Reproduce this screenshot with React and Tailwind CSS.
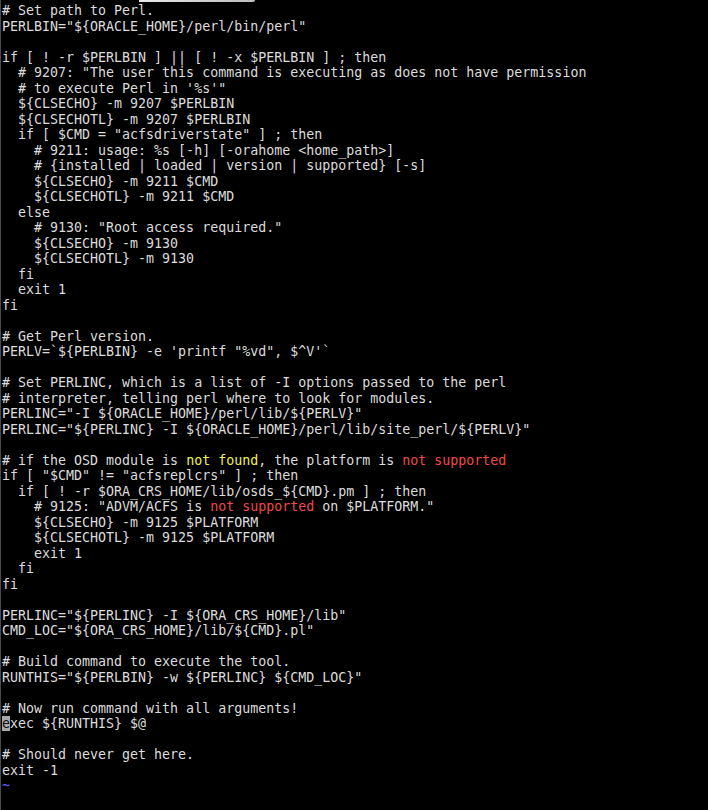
import React from 'react';

// Lines of the shell script as shown in the terminal (vim) window.
// Each line is a list of segments: plain strings, or [text, kind].
const lines = [
  ['# Set path to Perl.'],
  ['PERLBIN="${ORACLE_HOME}/perl/bin/perl"'],
  [''],
  ['if [ ! -r $PERLBIN ] || [ ! -x $PERLBIN ] ; then'],
  ['  # 9207: "The user this command is executing as does not have permission'],
  ["  # to execute Perl in '%s'\""],
  ['  ${CLSECHO} -m 9207 $PERLBIN'],
  ['  ${CLSECHOTL} -m 9207 $PERLBIN'],
  ['  if [ $CMD = "acfsdriverstate" ] ; then'],
  ['    # 9211: usage: %s [-h] [-orahome <home_path>]'],
  ['    # {installed | loaded | version | supported} [-s]'],
  ['    ${CLSECHO} -m 9211 $CMD'],
  ['    ${CLSECHOTL} -m 9211 $CMD'],
  ['  else'],
  ['    # 9130: "Root access required."'],
  ['    ${CLSECHO} -m 9130'],
  ['    ${CLSECHOTL} -m 9130'],
  ['  fi'],
  ['  exit 1'],
  ['fi'],
  [''],
  ['# Get Perl version.'],
  ['PERLV=`${PERLBIN} -e \'printf "%vd", $^V\'`'],
  [''],
  ['# Set PERLINC, which is a list of -I options passed to the perl'],
  ['# interpreter, telling perl where to look for modules.'],
  ['PERLINC="-I ${ORACLE_HOME}/perl/lib/${PERLV}"'],
  ['PERLINC="${PERLINC} -I ${ORACLE_HOME}/perl/lib/site_perl/${PERLV}"'],
  [''],
  ['# if the OSD module is ', ['not found', 'yellow'], ', the platform is ', ['not supported', 'red']],
  ['if [ "$CMD" != "acfsreplcrs" ] ; then'],
  ['  if [ ! -r $ORA_CRS_HOME/lib/osds_${CMD}.pm ] ; then'],
  ['    # 9125: "ADVM/ACFS is ', ['not supported', 'red'], ' on $PLATFORM."'],
  ['    ${CLSECHO} -m 9125 $PLATFORM'],
  ['    ${CLSECHOTL} -m 9125 $PLATFORM'],
  ['    exit 1'],
  ['  fi'],
  ['fi'],
  [''],
  ['PERLINC="${PERLINC} -I ${ORA_CRS_HOME}/lib"'],
  ['CMD_LOC="${ORA_CRS_HOME}/lib/${CMD}.pl"'],
  [''],
  ['# Build command to execute the tool.'],
  ['RUNTHIS="${PERLBIN} -w ${PERLINC} ${CMD_LOC}"'],
  [''],
  ['# Now run command with all arguments!'],
  [['e', 'cursor'], 'xec ${RUNTHIS} $@'],
  [''],
  ['# Should never get here.'],
  ['exit -1'],
  [['~', 'tilde']],
];

const kindClass = {
  yellow: 'text-[#f2f24a]',
  red: 'text-[#f04848]',
  cursor: 'bg-[#a8a8a8] text-[#101010]',
  tilde: 'text-[#5f5fff]',
};

const Segment = ({ seg }) => {
  if (typeof seg === 'string') return seg;
  const [text, kind] = seg;
  return <span className={kindClass[kind]}>{text}</span>;
};

const App = () => {
  return (
    <div className="w-[708px] h-[810px] overflow-hidden bg-black border-l border-[#4a4a4a]">
      {/* window edge peeking in at the top */}
      <div className="h-[2px] ml-[138px] w-[116px] bg-gradient-to-r from-[#e8e8e8] to-[#bdbdbd] rounded-br-sm" />
      <pre
        className="pt-[1px] pl-[1px] text-[13.3px] leading-[15.5px] text-[#dcdcdc] whitespace-pre"
        style={{ fontFamily: '"DejaVu Sans Mono", "Liberation Mono", monospace' }}
      >
        {lines.map((line, i) => (
          <div key={i} className="h-[15.5px]">
            {line.map((seg, j) => (
              <Segment key={j} seg={seg} />
            ))}
          </div>
        ))}
      </pre>
    </div>
  );
};

export default App;
